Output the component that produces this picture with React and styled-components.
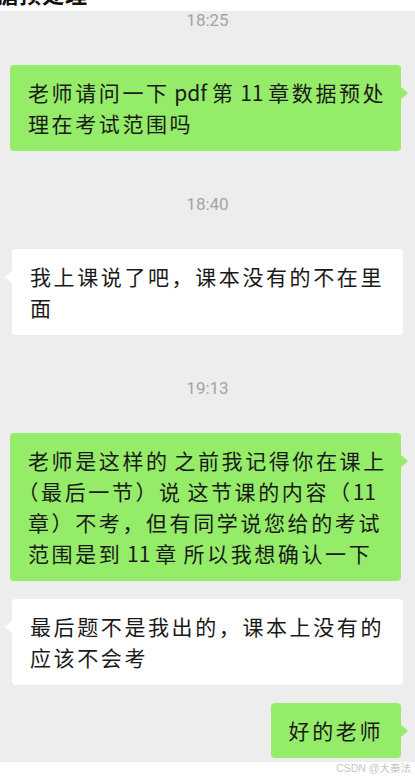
import React from 'react';
import styled, { createGlobalStyle, css } from 'styled-components';

const GlobalStyle = createGlobalStyle`
  html, body {
    margin: 0;
    padding: 0;
    background: #ffffff;
  }
  * {
    box-sizing: border-box;
  }
`;

const GREEN = '#95ec69';

const Page = styled.div`
  width: 415px;
  height: 776px;
  display: flex;
  flex-direction: column;
  overflow: hidden;
  font-family: 'Noto Sans CJK SC', 'Noto Sans', sans-serif;
`;

const TopStrip = styled.div`
  height: 11px;
  flex: none;
  background: #ffffff;
  display: flex;
  align-items: flex-end;
  padding-bottom: 7px;
  overflow: hidden;
`;

const CutTitle = styled.span`
  margin-left: -4px;
  font-size: 22px;
  line-height: 1;
  font-weight: 700;
  color: #111111;
  letter-spacing: 1px;
  white-space: nowrap;
`;

const Chat = styled.div`
  flex: 1;
  background: #ededed;
  display: flex;
  flex-direction: column;
  padding: 0 0 4px;
`;

const Time = styled.div`
  margin-top: ${p => (p.$first ? '0' : '44px')};
  margin-bottom: 36px;
  height: 18px;
  line-height: 18px;
  text-align: center;
  font-family: Roboto, 'Noto Sans', sans-serif;
  font-size: 17px;
  color: #a4a4a4;
`;

const Row = styled.div`
  display: flex;
  justify-content: ${p => (p.$mine ? 'flex-end' : 'flex-start')};
  padding: ${p => (p.$mine ? '0 14px 0 10px' : '0 12px')};
  & + & {
    margin-top: 18px;
  }
`;

const Bubble = styled.div`
  position: relative;
  width: ${p => (p.$full ? '391px' : 'auto')};
  padding: 12px 18px;
  border-radius: 4px;
  background: ${p => (p.$mine ? GREEN : '#ffffff')};
  color: #1a1a1a;
  font-size: 21px;
  line-height: 31px;
  letter-spacing: 2.6px;
  text-spacing-trim: trim-start;

  &::after {
    content: '';
    position: absolute;
    top: 22px;
    border: 6px solid transparent;
    ${p =>
      p.$mine
        ? css`
            left: 100%;
            border-left: 7px solid ${GREEN};
          `
        : css`
            right: 100%;
            border-right: 7px solid #ffffff;
          `}
  }
`;

const Line = styled.div`
  white-space: nowrap;
`;

const Latin = styled.span`
  letter-spacing: 0;
`;

const Footer = styled.div`
  height: 15px;
  flex: none;
  background: #ffffff;
  display: flex;
  justify-content: flex-end;
  padding-right: 4px;
`;

const Watermark = styled.span`
  font-family: 'Liberation Sans', 'Noto Sans CJK SC', sans-serif;
  font-size: 10.5px;
  line-height: 12px;
  color: #c6c6c6;
`;

const feed = [
  { time: '18:25' },
  { mine: true, lines: ['老师请问一下 pdf 第 11 章数据预处', '理在考试范围吗'] },
  { time: '18:40' },
  { mine: false, lines: ['我上课说了吧，课本没有的不在里', '面'] },
  { time: '19:13' },
  {
    mine: true,
    lines: [
      '老师是这样的 之前我记得你在课上',
      '（最后一节）说 这节课的内容（11',
      '章）不考，但有同学说您给的考试',
      '范围是到 11 章 所以我想确认一下',
    ],
  },
  { mine: false, lines: ['最后题不是我出的，课本上没有的', '应该不会考'] },
  { mine: true, short: true, lines: ['好的老师'] },
];

// wrap latin runs and spaces so the CJK tracking doesn't stretch them
const renderLine = text =>
  text.split(/([A-Za-z0-9 ]+)/).map((part, i) =>
    /[A-Za-z0-9 ]/.test(part) ? <Latin key={i}>{part}</Latin> : part
  );

const App = () => {
  let seenTime = false;
  return (
    <>
      <GlobalStyle />
      <Page>
        <TopStrip>
          <CutTitle>据预处理</CutTitle>
        </TopStrip>
        <Chat>
          {feed.map((item, idx) => {
            if (item.time) {
              const first = !seenTime;
              seenTime = true;
              return (
                <Time key={idx} $first={first}>
                  {item.time}
                </Time>
              );
            }
            return (
              <Row key={idx} $mine={item.mine}>
                <Bubble $mine={item.mine} $full={!item.short}>
                  {item.lines.map((l, j) => (
                    <Line key={j}>{renderLine(l)}</Line>
                  ))}
                </Bubble>
              </Row>
            );
          })}
        </Chat>
        <Footer>
          <Watermark>CSDN @大秦法</Watermark>
        </Footer>
      </Page>
    </>
  );
};

export default App;
